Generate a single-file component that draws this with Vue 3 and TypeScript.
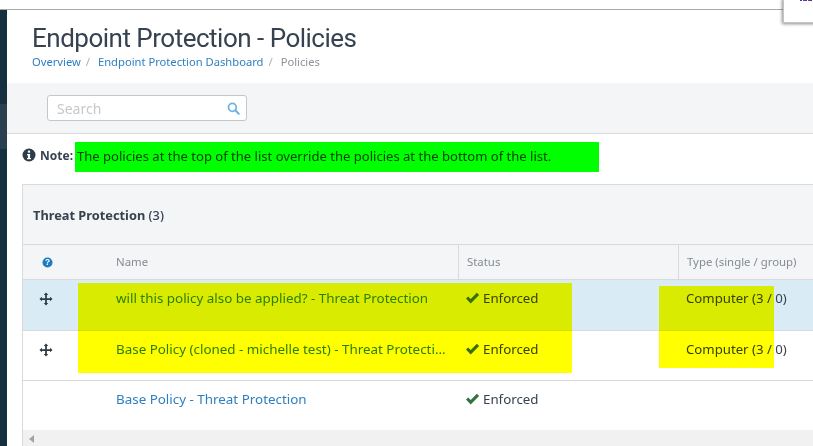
<script setup lang="ts">
interface Row { name: string; movable: boolean; type: string; selected: boolean }
const rows: Row[] = [
  { name: 'will this policy also be applied? - Threat Protection', movable: true, type: 'Computer (3 / 0)', selected: true },
  { name: 'Base Policy (cloned - michelle test) - Threat Protection', movable: true, type: 'Computer (3 / 0)', selected: false },
  { name: 'Base Policy - Threat Protection', movable: false, type: '', selected: false },
]
</script>

<template>
  <div class="page">
    <div class="topbar"></div>
    <div class="shell">
      <aside class="side">
        <div class="side-light"></div>
      </aside>
      <main class="main">
        <header class="head">
          <h1>Endpoint Protection - Policies</h1>
          <nav class="crumbs">
            <a>Overview</a><span class="sep">/</span>
            <a>Endpoint Protection Dashboard</a><span class="sep">/</span>
            <span class="cur">Policies</span>
          </nav>
        </header>
        <div class="searchbar">
          <div class="search">
            <span class="ph">Search</span>
            <svg viewBox="0 0 14 14" width="13" height="13"><circle cx="5.8" cy="5.8" r="4.2" fill="none" stroke="#6db3e4" stroke-width="1.9"/><path d="M8.9 8.9 12.6 12.6" stroke="#6db3e4" stroke-width="2.2" stroke-linecap="round"/></svg>
          </div>
        </div>
        <p class="note">
          <svg viewBox="0 0 14 14" width="14" height="14"><circle cx="7" cy="7" r="6.5" fill="#2e3b48"/><rect x="5.9" y="2.6" width="2.2" height="2.1" fill="#fff"/><path d="M5 6h3.1v4H9v1.3H5V10h.9V7.3H5z" fill="#fff"/></svg>
          <b>Note:</b>
          <span>The policies at the top of the list override the policies at the bottom of the list.</span>
        </p>
        <section class="panel">
          <h2><b>Threat Protection</b> (3)</h2>
          <div class="row cols">
            <div class="c-drag"><svg viewBox="0 0 12 12" width="11" height="11"><circle cx="6" cy="6" r="5.5" fill="#1f7cc0"/><text x="6" y="9.2" text-anchor="middle" font-size="9" font-weight="700" fill="#fff" font-family="Liberation Sans, sans-serif">?</text></svg></div>
            <div class="c-name">Name</div>
            <div class="c-status">Status</div>
            <div class="c-type">Type (single / group)</div>
          </div>
          <div v-for="r in rows" :key="r.name" class="row item" :class="{ selected: r.selected }">
            <div class="c-drag">
              <svg v-if="r.movable" viewBox="0 0 16 16" width="14" height="14" fill="#2e3b48"><path d="M8 .5 10.6 3.4H9V7h3.6V5.4L15.5 8l-2.9 2.6V9H9v3.6h1.6L8 15.5l-2.6-2.9H7V9H3.4v1.6L.5 8l2.9-2.6V7H7V3.4H5.4z"/></svg>
            </div>
            <div class="c-name"><a>{{ r.name }}</a></div>
            <div class="c-status">
              <svg viewBox="0 0 15 12" width="15" height="12"><path d="M1 6.6 3.2 4.4 5.7 7 11.9.8l2.2 2.2L5.7 11.4z" fill="#35713c"/></svg>
              <span>Enforced</span>
            </div>
            <div class="c-type">{{ r.type }}</div>
          </div>
          <div class="scroll"><i></i></div>
        </section>
      </main>
    </div>

    <div class="mark mark-green"></div>
    <div class="mark mark-name"></div>
    <div class="mark mark-type"></div>
    <div class="popup"><i></i></div>
  </div>
</template>

<style scoped>
.page {
  position: relative;
  width: 813px;
  height: 446px;
  overflow: hidden;
  background: #fff;
  font-family: "Noto Sans", "Open Sans", sans-serif;
  color: #36424f;
  display: flex;
  flex-direction: column;
}
.topbar { height: 10px; flex: none; border-bottom: 1px solid #a9a9a9; box-sizing: border-box; }
.shell { flex: 1; display: flex; min-height: 0; }
.side { width: 7px; flex: none; background: #17303f; padding-top: 94px; }
.side-light { height: 45px; background: #2a404e; }
.main { flex: 1; min-width: 0; }
.head { height: 73px; box-sizing: border-box; padding: 13px 0 0 25px; }
h1 {
  margin: 0;
  font-family: Roboto, sans-serif;
  font-size: 26px;
  line-height: 31px;
  font-weight: 400;
  letter-spacing: -0.5px;
  color: #36424f;
}
.crumbs { font-size: 11.2px; line-height: 14px; margin-top: 1px; white-space: nowrap; }
.crumbs a { color: #2d7fc1; }
.sep { color: #a9adb2; margin: 0 8px 0 5px; }
.cur { color: #8c9299; }
.searchbar {
  height: 51px;
  box-sizing: border-box;
  background: #f4f5f7;
  border-bottom: 1px solid #d9dadc;
  padding: 12px 0 0 40px;
}
.search {
  width: 200px;
  height: 26px;
  box-sizing: border-box;
  background: #fff;
  border: 1px solid #c3c6ca;
  border-radius: 3px;
  display: flex;
  align-items: center;
  justify-content: space-between;
  padding: 0 6px 0 9px;
}
.ph { font-size: 14px; color: #c6c8cb; line-height: 26px; padding-top: 1px; }
.note {
  margin: 0;
  height: 50px;
  box-sizing: border-box;
  padding: 13px 0 0 15px;
  display: flex;
  align-items: flex-start;
  font-size: 13.05px;
  line-height: 18px;
  white-space: nowrap;
}
.note svg { margin: 1px 4px 0 0; }
.note b { font-size: 12px; font-weight: 700; margin-right: 4px; }
.panel {
  margin-left: 15px;
  border: 1px solid #d9dadc;
  border-right: 0;
  border-bottom: 0;
  height: 262px;
  box-sizing: border-box;
  overflow: hidden;
}
h2 {
  margin: 0;
  height: 60px;
  box-sizing: border-box;
  padding-left: 10px;
  background: #f4f5f7;
  border-bottom: 1px solid #d9dadc;
  font-size: 12.8px;
  font-weight: 500;
  line-height: 61px;
}
h2 b { font-weight: 700; }
.row { display: flex; white-space: nowrap; }
.c-drag { width: 85px; flex: none; padding-left: 16px; box-sizing: border-box; }
.c-name { width: 350px; flex: none; box-sizing: border-box; padding: 0 11px 0 8px; }
.c-status { width: 220px; flex: none; box-sizing: border-box; padding: 0 8px; }
.c-type { flex: 1; box-sizing: border-box; padding: 0 8px; }
.cols {
  height: 34px;
  background: #f4f5f7;
  border-bottom: 1px solid #d9dadc;
  font-size: 11.4px;
  line-height: 33px;
  color: #858b92;
}
.cols .c-drag svg { margin: 12px 0 0 3px; display: block; }
.cols .c-status, .cols .c-type { border-left: 1px solid #d9dadc; }
.item {
  height: 50px;
  box-sizing: border-box;
  border-bottom: 1px solid #d9dadc;
  font-size: 13.4px;
  line-height: 36px;
}
.item.selected { background: #d9ebf5; height: 51px; }
.item .c-drag svg { display: block; margin-top: 12px; }
.item .c-name a { display: block; overflow: hidden; text-overflow: ellipsis; color: #2d7fc1; }
.c-status svg { margin-right: 3px; vertical-align: -1px; }
.item .c-status { padding-left: 7px; font-size: 13.3px; }
.item .c-type { padding-left: 8px; font-size: 13.2px; }
.scroll { height: 17px; background: #f1f1f1; display: flex; align-items: center; padding-left: 6px; margin-top: -1px; }
.scroll i { width: 0; height: 0; border: 4px solid transparent; border-left: 0; border-right: 5px solid #a3a3a3; }

.mark { position: absolute; mix-blend-mode: multiply; pointer-events: none; }
.mark-green { left: 75px; top: 142px; width: 524px; height: 30px; background: #0f0; }
.mark-name { left: 78px; top: 283px; width: 494px; height: 90px; background: #ff0; }
.mark-type { left: 659px; top: 286px; width: 115px; height: 82px; background: #ff0; }
.popup {
  position: absolute;
  left: 783px;
  top: -2px;
  width: 40px;
  height: 23px;
  background: #fff;
  border: 1px solid #c4c4c4;
  box-shadow: -1px 1px 3px rgba(0, 0, 0, 0.45);
}
.popup i {
  position: absolute;
  left: 16px;
  top: 0;
  width: 12px;
  height: 2px;
  background: repeating-linear-gradient(90deg, #2b3fa0 0 2px, #fff 2px 3px, #a02b8f 3px 5px);
}
</style>
